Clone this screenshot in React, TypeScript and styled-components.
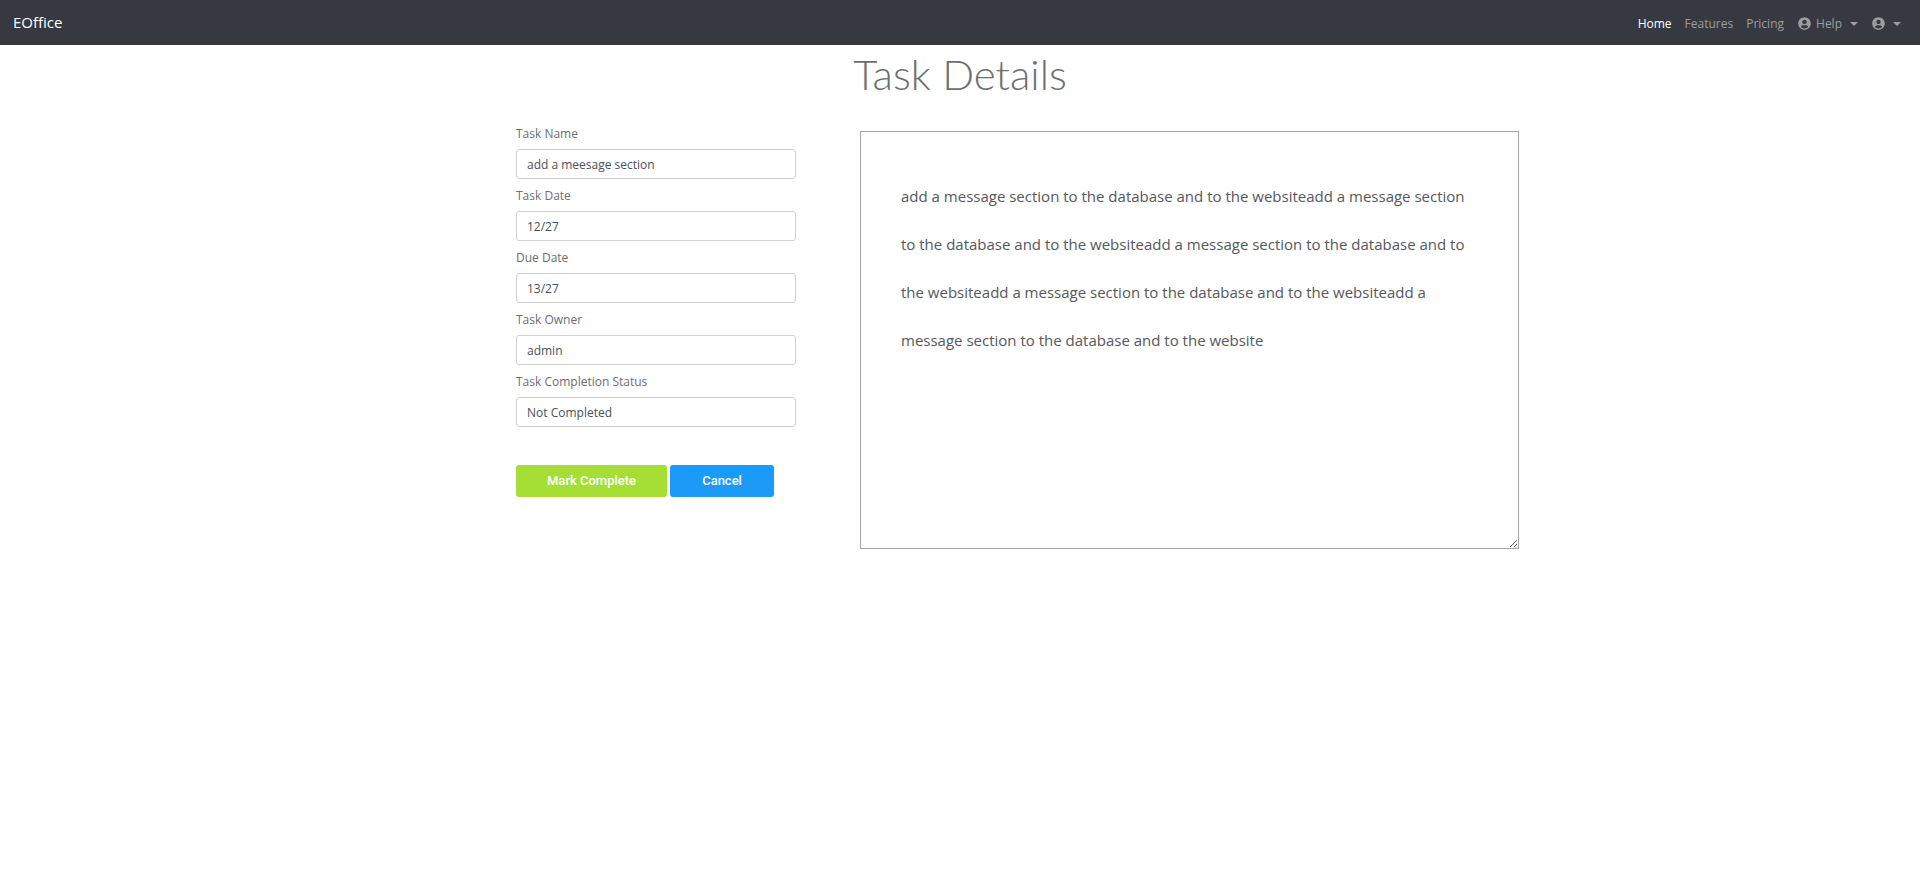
import React from "react";
import styled, { createGlobalStyle } from "styled-components";
import { FaUserCircle } from "react-icons/fa";

const GlobalStyle = createGlobalStyle`
  *, *::before, *::after { box-sizing: border-box; }
  body {
    margin: 0;
    background: #fff;
    color: #6c6e70;
    font-family: "Segoe UI", "Open Sans", "Noto Sans", sans-serif;
    font-size: 12px;
    line-height: 20px;
  }
`;

const Navbar = styled.nav`
  display: flex;
  align-items: center;
  justify-content: space-between;
  height: 45px;
  padding: 0 19px 0 13px;
  background: #363a40;
`;

const Brand = styled.a`
  padding-bottom: 2px;
  color: #fff;
  font-size: 15px;
  line-height: 24px;
  text-decoration: none;
`;

const NavList = styled.ul`
  display: flex;
  align-items: center;
  gap: 13px;
  margin: 0;
  padding: 2px 0 0;
  list-style: none;
`;

const NavLink = styled.a<{ $active?: boolean }>`
  display: flex;
  align-items: center;
  color: ${(p) => (p.$active ? "#fff" : "#9b9d9f")};
  text-decoration: none;
`;

const MenuButton = styled.button`
  display: flex;
  align-items: center;
  gap: 5px;
  padding: 0 0 0 1px;
  border: 0;
  background: none;
  color: #9b9d9f;
  font: inherit;
  cursor: pointer;

  &::after {
    content: "";
    margin-left: 3px;
    border-top: 4px solid;
    border-left: 4px solid transparent;
    border-right: 4px solid transparent;
  }
`;

const Title = styled.h1`
  margin: 0;
  font-family: "Segoe UI Light", Lato, sans-serif;
  font-size: 42px;
  font-weight: 300;
  line-height: 58px;
  text-align: center;
`;

const Content = styled.main`
  display: flex;
  align-items: flex-start;
  gap: 64px;
  max-width: 1140px;
  margin: 0 auto;
  padding: 21px 11px 0 126px;
`;

const Form = styled.form`
  flex: 0 0 280px;
`;

const Field = styled.div`
  display: flex;
  flex-direction: column;
  gap: 5px;
  margin-bottom: 7px;
`;

const Label = styled.label`
  font-size: 12px;
`;

const Input = styled.input`
  width: 100%;
  height: 30px;
  padding: 0 10px;
  border: 1px solid #ced0d4;
  border-radius: 3px;
  background: #fff;
  color: #495057;
  font: inherit;
`;

const Actions = styled.div`
  display: flex;
  gap: 3px;
  margin-top: 38px;
`;

const Button = styled.button<{ $color: string }>`
  min-width: 104px;
  height: 32px;
  padding: 0 31px 2px;
  border: 0;
  border-radius: 3px;
  background: ${(p) => p.$color};
  color: #fff;
  font-family: Roboto, sans-serif;
  font-size: 13px;
  font-weight: 500;
  cursor: pointer;
`;

const Description = styled.textarea`
  flex: 1;
  min-width: 0;
  height: 418px;
  margin-top: 7px;
  padding: 40px;
  border: 1px solid #a4a5a5;
  background: #fff;
  color: #56585a;
  font: inherit;
  font-size: 15px;
  line-height: 48px;
  resize: both;
`;

const fields = [
  { id: "task-name", label: "Task Name", value: "add a meesage section" },
  { id: "task-date", label: "Task Date", value: "12/27" },
  { id: "due-date", label: "Due Date", value: "13/27" },
  { id: "task-owner", label: "Task Owner", value: "admin" },
  { id: "task-status", label: "Task Completion Status", value: "Not Completed" },
];

const description = Array(5)
  .fill("add a message section to the database and to the website")
  .join("");

export default function App() {
  return (
    <>
      <GlobalStyle />
      <Navbar>
        <Brand href="#">EOffice</Brand>
        <NavList>
          <li><NavLink href="#" $active>Home</NavLink></li>
          <li><NavLink href="#">Features</NavLink></li>
          <li><NavLink href="#">Pricing</NavLink></li>
          <li><MenuButton type="button"><FaUserCircle size={13} />Help</MenuButton></li>
          <li><MenuButton type="button" aria-label="Account"><FaUserCircle size={13} /></MenuButton></li>
        </NavList>
      </Navbar>
      <Title>Task Details</Title>
      <Content>
        <Form onSubmit={(e) => e.preventDefault()}>
          {fields.map((f) => (
            <Field key={f.id}>
              <Label htmlFor={f.id}>{f.label}</Label>
              <Input id={f.id} type="text" defaultValue={f.value} />
            </Field>
          ))}
          <Actions>
            <Button type="submit" $color="#a5df36">Mark Complete</Button>
            <Button type="button" $color="#1b9af8">Cancel</Button>
          </Actions>
        </Form>
        <Description aria-label="Task description" defaultValue={description} spellCheck={false} />
      </Content>
    </>
  );
}
